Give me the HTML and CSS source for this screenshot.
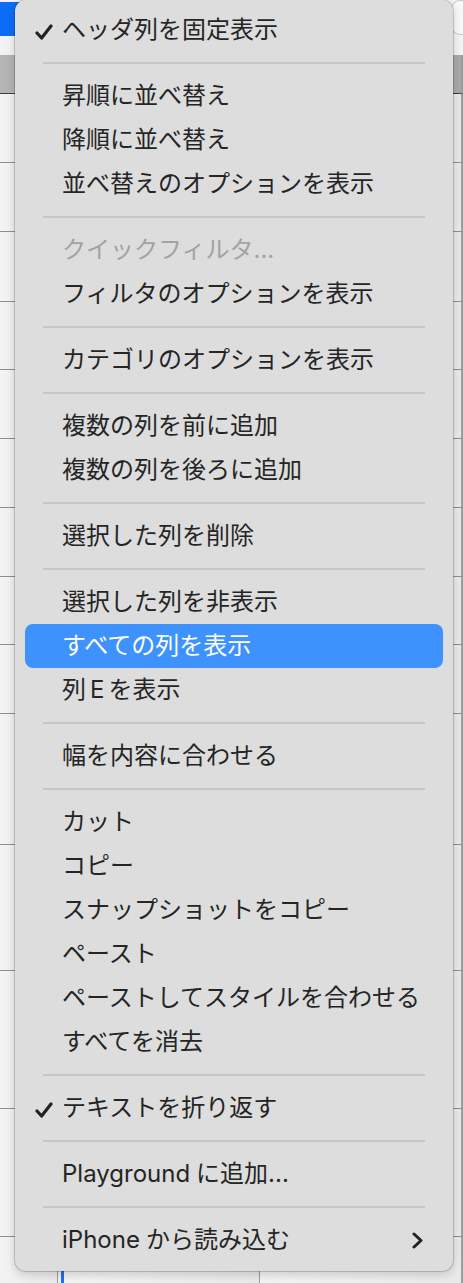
FILE: index.html
```html
<!DOCTYPE html>
<html lang="ja">
<head>
    <meta charset="UTF-8">
    <meta name="viewport" content="width=device-width, initial-scale=1.0">
    <title>コンテキストメニュー</title>
    <link rel="stylesheet" href="styles.css">
</head>
<body>
    <!-- spreadsheet behind the menu -->
    <div class="sheet">
        <div class="toolbar">
            <div class="tool-primary"></div>
            <div class="tool-ghost"></div>
        </div>
        <div class="grid-row head"><div></div><div></div><div></div><div></div></div>
        <div class="grid-row h69"><div></div><div></div><div></div><div></div></div>
        <div class="grid-row h69"><div></div><div></div><div></div><div></div></div>
        <div class="grid-row h70"><div></div><div></div><div></div><div></div></div>
        <div class="grid-row h68"><div></div><div></div><div></div><div></div></div>
        <div class="grid-row h69"><div></div><div></div><div></div><div></div></div>
        <div class="grid-row h69"><div></div><div></div><div></div><div></div></div>
        <div class="grid-row h69"><div></div><div></div><div></div><div></div></div>
        <div class="grid-row h68"><div></div><div></div><div></div><div></div></div>
        <div class="grid-row h69"><div></div><div></div><div></div><div></div></div>
        <div class="grid-row h131"><div></div><div></div><div></div><div></div></div>
        <div class="grid-row h126"><div></div><div></div><div></div><div></div></div>
        <div class="grid-row h138"><div></div><div></div><div></div><div></div></div>
        <div class="grid-row h128"><div></div><div></div><div></div><div></div></div>
        <div class="grid-row h60 last"><div></div><div class="selected"></div><div></div><div></div></div>
    </div>

    <div class="menu">
        <div class="item">
            <span class="mark">
                <svg width="18" height="16" viewBox="0 0 18 16"><path d="M2 9 L6.6 14 L16 2" fill="none" stroke="#222" stroke-width="3.2" stroke-linecap="round" stroke-linejoin="round"/></svg>
            </span>
            <span class="label">ヘッダ列を固定表示</span>
        </div>
        <div class="sep"></div>
        <div class="item"><span class="mark"></span><span class="label">昇順に並べ替え</span></div>
        <div class="item"><span class="mark"></span><span class="label">降順に並べ替え</span></div>
        <div class="item"><span class="mark"></span><span class="label">並べ替えのオプションを表示</span></div>
        <div class="sep"></div>
        <div class="item disabled"><span class="mark"></span><span class="label">クイックフィルタ...</span></div>
        <div class="item"><span class="mark"></span><span class="label">フィルタのオプションを表示</span></div>
        <div class="sep"></div>
        <div class="item"><span class="mark"></span><span class="label">カテゴリのオプションを表示</span></div>
        <div class="sep"></div>
        <div class="item"><span class="mark"></span><span class="label">複数の列を前に追加</span></div>
        <div class="item"><span class="mark"></span><span class="label">複数の列を後ろに追加</span></div>
        <div class="sep"></div>
        <div class="item"><span class="mark"></span><span class="label">選択した列を削除</span></div>
        <div class="sep"></div>
        <div class="item"><span class="mark"></span><span class="label">選択した列を非表示</span></div>
        <div class="item active"><span class="mark"></span><span class="label">すべての列を表示</span></div>
        <div class="item"><span class="mark"></span><span class="label">列<span class="latin-gap">E</span>を表示</span></div>
        <div class="sep"></div>
        <div class="item"><span class="mark"></span><span class="label">幅を内容に合わせる</span></div>
        <div class="sep"></div>
        <div class="item"><span class="mark"></span><span class="label">カット</span></div>
        <div class="item"><span class="mark"></span><span class="label">コピー</span></div>
        <div class="item"><span class="mark"></span><span class="label">スナップショットをコピー</span></div>
        <div class="item"><span class="mark"></span><span class="label">ペースト</span></div>
        <div class="item"><span class="mark"></span><span class="label">ペーストしてスタイルを合わせる</span></div>
        <div class="item"><span class="mark"></span><span class="label">すべてを消去</span></div>
        <div class="sep"></div>
        <div class="item">
            <span class="mark">
                <svg width="18" height="16" viewBox="0 0 18 16"><path d="M2 9 L6.6 14 L16 2" fill="none" stroke="#222" stroke-width="3.2" stroke-linecap="round" stroke-linejoin="round"/></svg>
            </span>
            <span class="label">テキストを折り返す</span>
        </div>
        <div class="sep"></div>
        <div class="item"><span class="mark"></span><span class="label"><span class="latin-end">Playground</span>に追加...</span></div>
        <div class="sep"></div>
        <div class="item">
            <span class="mark"></span>
            <span class="label"><span class="latin-end">iPhone</span>から読み込む</span>
            <svg class="chev" width="13" height="17" viewBox="0 0 13 17"><path d="M3 2 L10 8.5 L3 15" fill="none" stroke="#222" stroke-width="3" stroke-linecap="round" stroke-linejoin="round"/></svg>
        </div>
    </div>
</body>
</html>
```

FILE: styles.css
```css
body {
    margin: 0;
    width: 463px;
    height: 1283px;
    overflow: hidden;
    position: relative;
    background: #f1f1f1;
    font-family: "Inter", "Noto Sans CJK JP", sans-serif;
}

/* sheet */
.sheet {
    overflow: hidden;
}
.toolbar {
    height: 55px;
    display: flex;
    align-items: flex-start;
    background: #f3f3f3;
    overflow: hidden;
}
.tool-primary {
    width: 60px;
    height: 34px;
    margin-top: 2px;
    background: #0b6df6;
}
.tool-ghost {
    margin-left: auto;
    width: 11px;
    height: 33px;
    border: 1px solid #c8c8c8;
    border-right: none;
    border-radius: 9px 0 0 9px;
    background: #f8f8f8;
}
.grid-row {
    display: grid;
    grid-template-columns: 58px 202px 202px 1fr;
}
.grid-row > div {
    box-sizing: border-box;
    border-right: 1px solid #9c9c9c;
    border-bottom: 1px solid #8e8e8e;
    background: linear-gradient(to right, #f3f3f3, #e9e9e9);
}
.head > div {
    height: 39px;
    background: #a9a9a9;
    border-bottom-color: #3e3e3e;
}
.head > div:first-child {
    background: #b4b5b4;
}
.h68 > div { height: 68px; }
.h69 > div { height: 69px; }
.h70 > div { height: 70px; }
.h126 > div { height: 126px; }
.h128 > div { height: 128px; }
.h131 > div { height: 131px; }
.h138 > div { height: 138px; }
.h60 > div { height: 60px; border-bottom: none; }
.last .selected {
    border-left: 3px solid #1f6ff0;
    margin-left: 3px;
}

/* menu */
.menu {
    position: absolute;
    left: 15px;
    top: 0;
    width: 438px;
    box-sizing: border-box;
    padding: 8px 0 9px;
    background: #dcdddc;
    border-radius: 11px;
    box-shadow: 0 0 0 1px rgba(0, 0, 0, 0.16), 0 3px 10px rgba(0, 0, 0, 0.18);
}
.item {
    height: 44px;
    margin: 0 10px;
    display: flex;
    align-items: center;
    border-radius: 8px;
    color: #252525;
    font-size: 24px;
}
.item.active {
    background: #3e92fd;
    color: #fff;
}
.item.disabled {
    color: #a3a3a3;
}
.mark {
    width: 37px;
    flex: none;
    box-sizing: border-box;
    padding-left: 10px;
    padding-top: 4px;
    display: flex;
}
.label {
    line-height: 1;
    white-space: nowrap;
}
.latin-gap {
    margin: 0 4px;
}
.latin-end {
    margin-right: 6px;
}
.chev {
    margin-left: auto;
    margin-right: 19px;
}
.sep {
    height: 2px;
    margin: 10px 28px;
    background: #c6c7c6;
}
```
